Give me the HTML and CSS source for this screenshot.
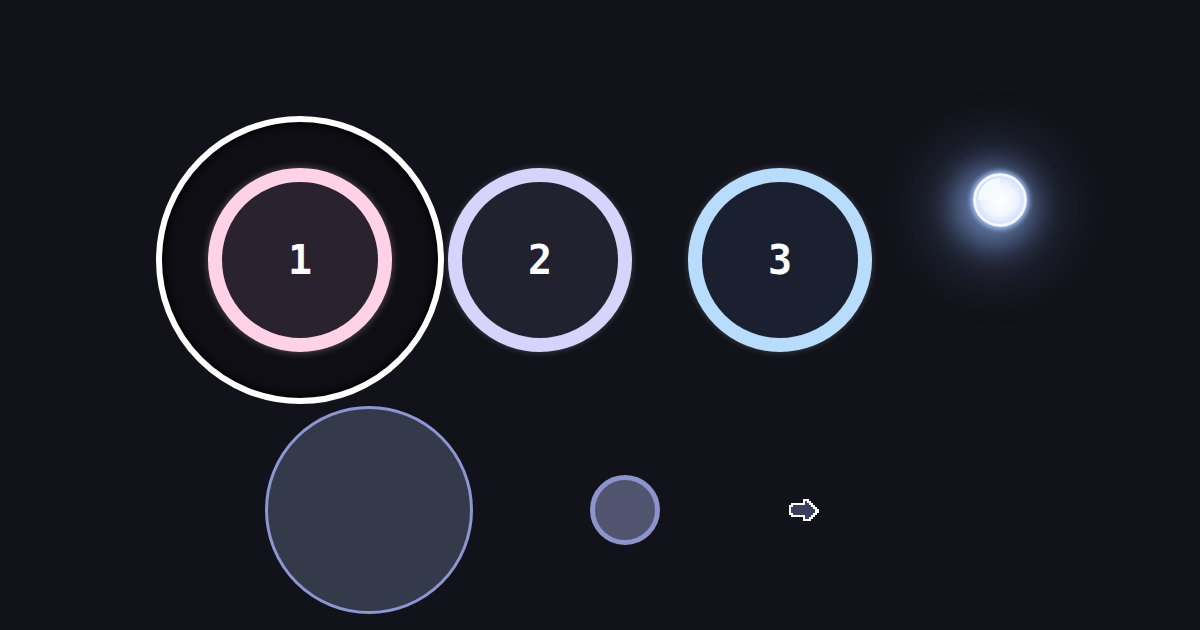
FILE: index.html
```html
<!DOCTYPE html>
<html>
<head>
<meta charset="utf-8">
<link rel="stylesheet" href="styles.css">
</head>
<body>
<main class="stage">
  <div class="row row-top">
    <div class="selected">
      <div class="step step-pink"><span class="num">1</span></div>
    </div>
    <div class="step step-lav"><span class="num">2</span></div>
    <div class="step step-blue"><span class="num">3</span></div>
    <div class="orb"></div>
  </div>
  <div class="row row-bottom">
    <div class="big-dot"></div>
    <div class="small-dot"></div>
    <svg class="arrow" width="34" height="26" viewBox="0 0 17 13" shape-rendering="crispEdges">
      <path d="M1.5 4.5 H2.5 V3.5 H8.5 V1.5 H10.5 V2.5 H11.5 V3.5 H12.5 V4.5 H13.5 V5.5 H14.5 V6.5 H15.5 V7.5 H14.5 V8.5 H13.5 V9.5 H12.5 V10.5 H11.5 V11.5 H8.5 V9.5 H2.5 V8.5 H1.5 Z" fill="#3b3f5e" stroke="#ffffff" stroke-width="1"/>
    </svg>
  </div>
</main>
</body>
</html>
```

FILE: styles.css
```css
html, body {
  margin: 0;
  padding: 0;
  background: #12121a;
  width: 1200px;
  height: 630px;
  overflow: hidden;
}

.stage {
  display: flex;
  flex-direction: column;
  padding-top: 168px;
  gap: 54px;
}

.row {
  display: flex;
}

.row-top {
  padding-left: 208px;
  align-items: flex-start;
  gap: 56px;
}

.selected {
  position: relative;
  width: 184px;
  height: 184px;
}

.selected::before {
  content: "";
  position: absolute;
  left: -52px;
  top: -52px;
  width: 288px;
  height: 288px;
  box-sizing: border-box;
  border-radius: 50%;
  border: 6px solid #ffffff;
  background: #0e0e14;
  box-shadow: inset 0 0 6px 3px #050508;
}

.step {
  position: relative;
  width: 184px;
  height: 184px;
  box-sizing: border-box;
  border-radius: 50%;
  border: 14px solid;
  display: flex;
  align-items: center;
  justify-content: center;
}

.step-pink {
  border-color: #ffd2e8;
  background: #2b2230;
  box-shadow: 0 0 8px rgba(255, 200, 230, 0.35);
}

.step-lav {
  border-color: #d7d3fb;
  background: #22212f;
  box-shadow: 0 0 6px rgba(215, 210, 250, 0.25);
}

.step-blue {
  border-color: #b8dcfc;
  background: #1b2030;
  box-shadow: 0 0 6px rgba(184, 220, 252, 0.25);
}

.num {
  font-family: "DejaVu Sans Mono", monospace;
  font-weight: bold;
  font-size: 40px;
  line-height: 1;
  color: #ffffff;
}

.orb {
  position: relative;
  margin-left: 45px;
  margin-top: 5px;
  width: 54px;
  height: 54px;
  box-sizing: border-box;
  border-radius: 50%;
  border: 3px solid #f2f6ff;
  background: radial-gradient(circle, #ffffff 0%, #f2f6ff 45%, #c8d8f8 82%, #9cb6ec 100%);
  box-shadow: 0 0 5px 2px rgba(170, 200, 250, 0.95),
              -6px 8px 60px 30px rgba(110, 140, 200, 0.38),
              -6px 6px 28px 12px rgba(140, 170, 230, 0.6);
}

.orb::after {
  content: "";
  position: absolute;
  inset: 2px;
  border-radius: 50%;
  background: conic-gradient(from 270deg, #f6f9ff 0deg 90deg, transparent 90deg 360deg);
}

.row-bottom {
  padding-left: 265px;
  align-items: center;
}

.big-dot {
  width: 208px;
  height: 208px;
  box-sizing: border-box;
  border-radius: 50%;
  border: 3px solid #8e96d2;
  background: #343a4a;
}

.small-dot {
  margin-left: 117px;
  width: 70px;
  height: 70px;
  box-sizing: border-box;
  border-radius: 50%;
  border: 5px solid #8d94cd;
  background: #50546f;
}

.arrow {
  display: block;
  margin-left: 127px;
}
```
